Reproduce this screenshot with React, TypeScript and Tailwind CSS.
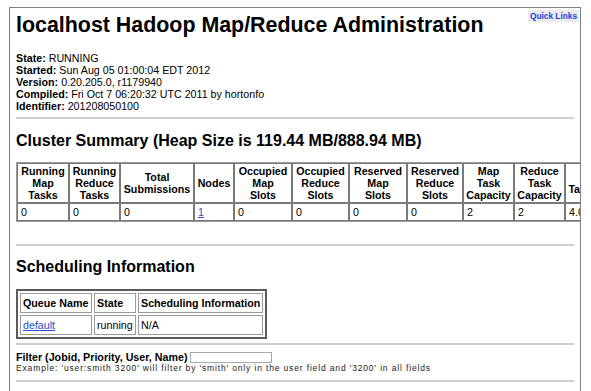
import React from "react";

const th =
  "border border-[#7a7a7a] px-[2px] py-[1px] text-center align-middle font-bold leading-[12px]";
const td = "border border-[#7a7a7a] px-[3px] py-[2px] text-left leading-[12px]";

const cols: { w: number; h: React.ReactNode; v: React.ReactNode }[] = [
  { w: 52, h: <>Running<br />Map<br />Tasks</>, v: "0" },
  { w: 51, h: <>Running<br />Reduce<br />Tasks</>, v: "0" },
  { w: 74, h: <>Total<br />Submissions</>, v: "0" },
  { w: 40, h: <>Nodes</>, v: <a className="text-[#2a4fc4] underline">1</a> },
  { w: 59, h: <>Occupied<br />Map<br />Slots</>, v: "0" },
  { w: 57, h: <>Occupied<br />Reduce<br />Slots</>, v: "0" },
  { w: 58, h: <>Reserved<br />Map<br />Slots</>, v: "0" },
  { w: 56, h: <>Reserved<br />Reduce<br />Slots</>, v: "0" },
  { w: 51, h: <>Map<br />Task<br />Capacity</>, v: "2" },
  { w: 51, h: <>Reduce<br />Task<br />Capacity</>, v: "2" },
  { w: 66, h: <>Avg.<br />Tasks/Node</>, v: "4.00" },
  { w: 60, h: <>Blacklisted<br />Nodes</>, v: "0" },
];

const sth =
  "border border-[#9a9a9a] px-[2px] py-[3px] text-left font-bold leading-[12px] whitespace-nowrap";
const std = "border border-[#9a9a9a] px-[2px] py-[3px] leading-[12px] whitespace-nowrap";

export default function App() {
  return (
    <div className="w-[591px] h-[391px] bg-white overflow-hidden font-['Liberation_Sans',Arial,Helvetica,sans-serif] text-black">
      <div className="ml-[9px] mt-[7px] w-[572px] h-[384px] border-l border-r border-t border-[#808080] relative overflow-hidden">
        <div className="absolute right-[1px] top-[2px] bg-[#ececec] px-[2px] h-[12px] leading-[12px] text-[8.3px] font-bold text-[#1f3fe0]">
          Quick Links
        </div>
        <div className="pl-[6px] pr-[6px] text-[10.7px]">
          <h1 className="mt-[5px] text-[21.4px] leading-[24px] font-bold whitespace-nowrap">
            localhost Hadoop Map/Reduce Administration
          </h1>
          <div className="mt-[15px] leading-[12px]">
            <div><b>State:</b> RUNNING</div>
            <div><b>Started:</b> Sun Aug 05 01:00:04 EDT 2012</div>
            <div><b>Version:</b> 0.20.205.0, r1179940</div>
            <div><b>Compiled:</b> Fri Oct 7 06:20:32 UTC 2011 by hortonfo</div>
            <div><b>Identifier:</b> 201208050100</div>
          </div>
          <div className="mt-[5px] h-[2px] bg-[#cfcfcf]" />
          <h2 className="mt-[13px] text-[16px] leading-[18px] font-bold whitespace-nowrap">
            Cluster Summary (Heap Size is 119.44 MB/888.94 MB)
          </h2>
          <table className="mt-[12px] table-fixed border-separate border-spacing-0 border border-[#9a9a9a] w-max">
            <tbody>
              <tr>
                {cols.map((c, i) => (
                  <th key={i} className={th} style={{ width: c.w - (i === 4 ? 1 : 0) }}>
                    {c.h}
                  </th>
                ))}
              </tr>
              <tr>
                {cols.map((c, i) => (
                  <td key={i} className={td}>
                    {c.v}
                  </td>
                ))}
              </tr>
            </tbody>
          </table>
          <div className="mt-[22px] h-[2px] bg-[#cfcfcf]" />
          <h2 className="mt-[12px] text-[16px] leading-[18px] font-bold">Scheduling Information</h2>
          <table className="mt-[13px] border-separate border-spacing-[2px] border-2 border-[#5a5a5a]">
            <tbody>
              <tr>
                <th className={`${sth} w-[72px]`}>Queue Name</th>
                <th className={`${sth} w-[42px]`}>State</th>
                <th className={`${sth} w-[124px] px-[1px]`}>Scheduling Information</th>
              </tr>
              <tr>
                <td className={std}>
                  <a className="text-[#2a4fc4] underline">default</a>
                </td>
                <td className={std}>running</td>
                <td className={std}>N/A</td>
              </tr>
            </tbody>
          </table>
          <div className="mt-[4px] h-[2px] bg-[#cfcfcf]" />
          <div className="mt-[6px] flex items-center h-[12px] leading-[12px]">
            <b>Filter (Jobid, Priority, User, Name)</b>
            <span className="ml-[3px] inline-block w-[82px] h-[11px] border border-[#a8a8a8] bg-white" />
          </div>
          <div className="text-[8.5px] leading-[10px] tracking-[0.85px] text-[#222] whitespace-nowrap">
            Example: 'user:smith 3200' will filter by 'smith' only in the user field and '3200' in all fields
          </div>
          <div className="mt-[7px] h-[2px] bg-[#cfcfcf]" />
        </div>
      </div>
    </div>
  );
}
